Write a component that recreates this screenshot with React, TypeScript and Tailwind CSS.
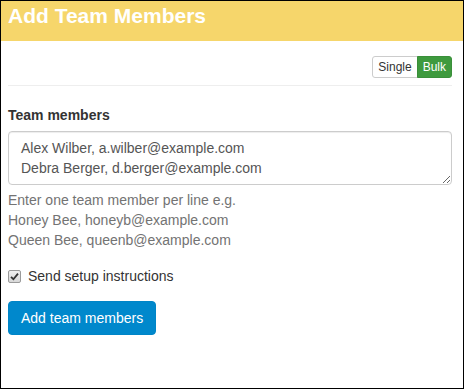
import { useState } from "react";

export default function App() {
  const [mode, setMode] = useState<"single" | "bulk">("bulk");
  const [members, setMembers] = useState(
    "Alex Wilber, a.wilber@example.com\nDebra Berger, d.berger@example.com"
  );
  const [sendSetup, setSendSetup] = useState(true);

  return (
    <div className="h-screen w-full overflow-hidden border border-black bg-white font-['Liberation_Sans',Arial,sans-serif] text-[14px] text-[#333]">
      {/* Bandeau titre */}
      <div className="h-[40px] bg-[#f6d66b] pl-[7px] text-[21px] font-bold leading-[30px] text-white">
        Add Team Members
      </div>

      <div className="pl-[7px] pr-[11px] pt-[15px]">
        {/* Bascule Single / Bulk */}
        <div className="flex justify-end">
          <div className="inline-flex h-[22px] text-[12px] leading-[20px]">
            <button
              type="button"
              onClick={() => setMode("single")}
              className={`rounded-l-[3px] border px-[5px] ${
                mode === "single" ? "border-[#3a8f3a] bg-[#3e9a3e] text-white" : "border-[#ccc] bg-white text-[#333]"
              }`}
            >
              Single
            </button>
            <button
              type="button"
              onClick={() => setMode("bulk")}
              className={`-ml-px rounded-r-[3px] border px-[5px] ${
                mode === "bulk" ? "border-[#3a8f3a] bg-[#3e9a3e] text-white" : "border-[#ccc] bg-white text-[#333]"
              }`}
            >
              Bulk
            </button>
          </div>
        </div>

        <div className="mt-[7px] border-t border-[#eee]" />

        <label className="mt-[19px] block font-bold leading-[20px] text-[#333]">Team members</label>
        <textarea
          value={members}
          onChange={(e) => setMembers(e.target.value)}
          className="mt-[6px] block h-[54px] w-full resize-y rounded-[4px] border border-[#ccc] px-[12px] py-[6px] text-[14px] leading-[20px] text-[#555] shadow-[inset_0_1px_1px_rgba(0,0,0,0.075)] outline-none"
        />
        <p className="mt-[5px] leading-[20px] text-[#737373]">
          Enter one team member per line e.g.
          <br />
          Honey Bee, honeyb@example.com
          <br />
          Queen Bee, queenb@example.com
        </p>

        {/* Case à cocher */}
        <label className="mt-[16px] flex cursor-pointer items-center leading-[20px] text-[#333]">
          <input
            type="checkbox"
            checked={sendSetup}
            onChange={(e) => setSendSetup(e.target.checked)}
            className="sr-only"
          />
          <span className="flex h-[13px] w-[13px] items-center justify-center rounded-[2px] border border-[#9a9a9a] bg-gradient-to-b from-[#f0f0f0] to-[#d8d8d8]">
            {sendSetup && (
              <svg width="9" height="9" viewBox="0 0 9 9">
                <path d="M1 4.8 L3.4 7.2 L8 1.6" fill="none" stroke="#333" strokeWidth="1.8" />
              </svg>
            )}
          </span>
          <span className="ml-[7px]">Send setup instructions</span>
        </label>

        <button
          type="button"
          className="mt-[15px] block rounded-[4px] border border-[#0085c7] bg-[#0088cc] px-[12px] py-[6px] text-[14px] leading-[20px] text-white"
        >
          Add team members
        </button>
      </div>
    </div>
  );
}
